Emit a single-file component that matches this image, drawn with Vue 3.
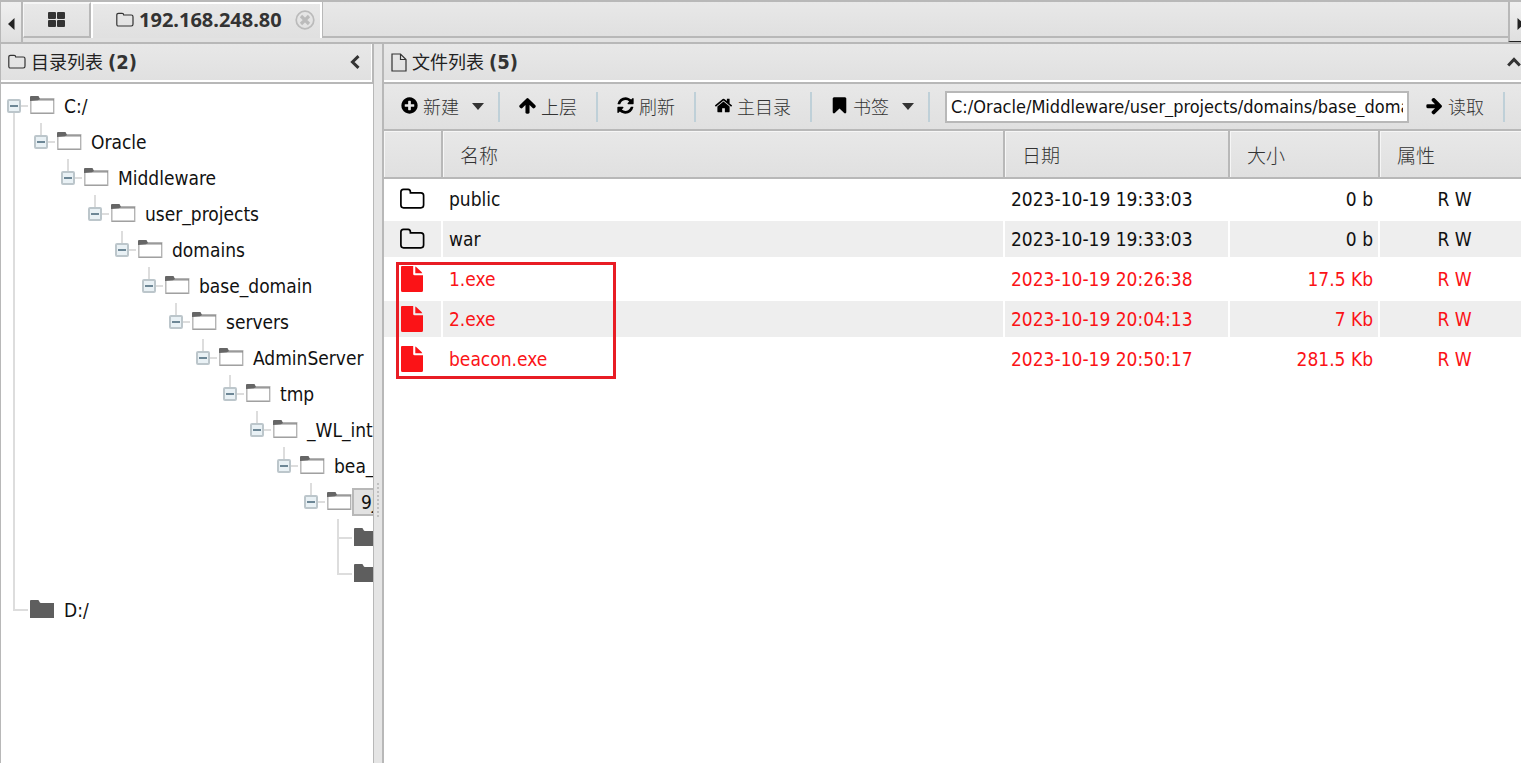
<script setup>
import { ref } from 'vue'

const path = ref('C:/Oracle/Middleware/user_projects/domains/base_domain/servers/AdminServer/tmp/')

const tree = [
  { name: 'C:/', depth: 0, open: true },
  { name: 'Oracle', depth: 1, open: true },
  { name: 'Middleware', depth: 2, open: true },
  { name: 'user_projects', depth: 3, open: true },
  { name: 'domains', depth: 4, open: true },
  { name: 'base_domain', depth: 5, open: true },
  { name: 'servers', depth: 6, open: true },
  { name: 'AdminServer', depth: 7, open: true },
  { name: 'tmp', depth: 8, open: true },
  { name: '_WL_internal', depth: 9, open: true },
  { name: 'bea_wls_internal', depth: 10, open: true },
  { name: '9j4dqk', depth: 11, open: true, selected: true },
  { name: '', depth: 12 },
  { name: '', depth: 12, last: true },
  { name: 'D:/', depth: 0, last: true },
]

const files = [
  { name: 'public', date: '2023-10-19 19:33:03', size: '0 b', attr: 'R W', dir: true },
  { name: 'war', date: '2023-10-19 19:33:03', size: '0 b', attr: 'R W', dir: true },
  { name: '1.exe', date: '2023-10-19 20:26:38', size: '17.5 Kb', attr: 'R W' },
  { name: '2.exe', date: '2023-10-19 20:04:13', size: '7 Kb', attr: 'R W' },
  { name: 'beacon.exe', date: '2023-10-19 20:50:17', size: '281.5 Kb', attr: 'R W' },
]

const icons = {
  plus: 'M1344 960v-128q0-26-19-45t-45-19h-256v-256q0-26-19-45t-45-19h-128q-26 0-45 19t-19 45v256h-256q-26 0-45 19t-19 45v128q0 26 19 45t45 19h256v256q0 26 19 45t45 19h128q26 0 45-19t19-45v-256h256q26 0 45-19t19-45zm320-64q0 209-103 385.5t-279.5 279.5-385.5 103-385.5-103-279.5-279.5-103-385.5 103-385.5 279.5-279.5 385.5-103 385.5 103 279.5 279.5 103 385.5z',
  up: 'M1675 971q0 51-37 90l-75 75q-38 38-91 38-54 0-90-38l-294-293v704q0 52-37.5 84.5t-90.5 32.5h-128q-53 0-90.5-32.5t-37.5-84.5v-704l-294 293q-36 38-90 38t-90-38l-75-75q-38-38-38-90 0-53 38-91l651-651q35-37 90-37 54 0 91 37l651 651q37 39 37 91z',
  refresh: 'M1639 1056q0 5-1 7-64 268-268 434.5t-478 166.5q-146 0-282.5-55t-243.5-157l-129 129q-19 19-45 19t-45-19-19-45v-448q0-26 19-45t45-19h448q26 0 45 19t19 45-19 45l-137 137q71 66 161 102t187 36q134 0 250-65t186-179q11-17 53-117 8-23 30-23h192q13 0 22.5 9.5t9.5 22.5zm25-800v448q0 26-19 45t-45 19h-448q-26 0-45-19t-19-45 19-45l138-138q-148-137-349-137-134 0-250 65t-186 179q-11 17-53 117-8 23-30 23h-199q-13 0-22.5-9.5t-9.5-22.5v-7q65-268 270-434.5t480-166.5q146 0 284 55.5t245 156.5l130-129q19-19 45-19t45 19 19 45z',
  home: 'M1472 992v480q0 26-19 45t-45 19h-384v-384h-256v384h-384q-26 0-45-19t-19-45v-480q0-1 .5-3t.5-3l575-474 575 474q1 2 1 6zm223-69l-62 74q-8 9-21 11h-3q-13 0-21-7l-692-577-692 577q-12 8-24 7-13-2-21-11l-62-74q-8-10-7-23.5t11-21.5l719-599q32-26 76-26t76 26l244 204v-195q0-14 9-23t23-9h192q14 0 23 9t9 23v408l219 182q10 8 11 21.5t-7 23.5z',
  bookmark: 'M1420 128q23 0 44 9 33 13 52.5 41t19.5 62v1289q0 34-19.5 62t-52.5 41q-19 8-44 8-48 0-83-32l-441-424-441 424q-36 33-83 33-23 0-44-9-33-13-52.5-41t-19.5-62v-1289q0-34 19.5-62t52.5-41q21-9 44-9h1048z',
  right: 'M1600 960q0 54-37 91l-651 651q-39 37-91 37-51 0-90-37l-75-75q-38-38-38-91t38-91l293-293h-704q-52 0-84.5-37.5t-32.5-90.5v-128q0-53 32.5-90.5t84.5-37.5h704l-293-294q-38-36-38-90t38-90l75-75q38-38 90-38 53 0 91 38l651 651q37 35 37 90z',
}

const actions = [
  { label: '新建', icon: icons.plus, menu: true },
  { label: '上层', icon: icons.up },
  { label: '刷新', icon: icons.refresh },
  { label: '主目录', icon: icons.home },
  { label: '书签', icon: icons.bookmark, menu: true },
]
</script>

<template>
  <div class="app">
    <nav class="tabbar">
      <button class="scroller" aria-label="向左滚动">
        <svg width="7" height="12" viewBox="0 0 7 12"><path d="M6.500 0v12L0 6z" fill="#222" /></svg>
      </button>
      <button class="tab home" aria-label="主页">
        <svg width="17" height="15" viewBox="0 0 17 15" fill="#333">
          <rect width="8" height="7" rx="1" /><rect x="9" width="8" height="7" rx="1" />
          <rect y="8" width="8" height="7" rx="1" /><rect x="9" y="8" width="8" height="7" rx="1" />
        </svg>
      </button>
      <div class="tab active">
        <svg width="18" height="16" viewBox="0 0 18 16" fill="none" stroke="#333" stroke-width="1.200">
          <path d="M.8 3q0-1.700 1.700-1.700h3.600q1.600 0 1.600 1.700h7.600q1.700 0 1.700 1.700v7.600q0 1.700-1.700 1.700H2.500Q.8 14 .8 12.300z" />
        </svg>
        <span>192.168.248.80</span>
        <button class="close" aria-label="关闭">
          <svg width="20" height="20" viewBox="0 0 20 20" fill="none" stroke="#bbb">
            <circle cx="10" cy="10" r="8.800" stroke-width="1.700" />
            <path d="M6 6l8 8M14 6l-8 8" stroke-width="3.200" />
          </svg>
        </button>
      </div>
      <div class="rest"></div>
      <button class="scroller end" aria-label="向右滚动">
        <svg width="7" height="12" viewBox="0 0 7 12"><path d="M.5 0v12L7 6z" fill="#222" /></svg>
      </button>
    </nav>

    <main class="panes">
      <aside class="side">
        <header class="head">
          <svg width="18" height="16" viewBox="0 0 18 16" fill="none" stroke="#333" stroke-width="1.200">
            <path d="M.8 3q0-1.700 1.700-1.700h3.600q1.600 0 1.600 1.700h7.600q1.700 0 1.700 1.700v7.600q0 1.700-1.700 1.700H2.500Q.8 14 .8 12.300z" />
          </svg>
          <h2>目录列表 <b>(2)</b></h2>
          <button class="fold" aria-label="折叠">
            <svg width="10" height="14" viewBox="0 0 10 14"><path d="M8.500 1.200L2.500 7l6 5.800" fill="none" stroke="#333" stroke-width="3" /></svg>
          </button>
        </header>
        <ul class="tree">
          <li v-for="(n, i) in tree" :key="i" :class="{ last: n.last, nested: n.depth > 0 }">
            <span v-if="n.depth > 0" class="indent" :style="{ width: n.depth * 27 + 'px' }"></span>
            <span class="branch" :class="{ leaf: !n.open }">
              <button v-if="n.open" class="toggle" aria-label="收起"></button>
            </span>
            <svg v-if="n.open" class="folder" width="25" height="20" viewBox="0 0 25 20">
              <path d="M.8 3.800h22.900V18.300H.8z" fill="#fff" stroke="#b4b4b4" stroke-width="1.400" />
              <path d="M.5 4.200h23.500v1.300H.5z" fill="#8a8a8a" />
              <path d="M1 18.400h22.500" stroke="#a0a0a0" stroke-width="1.200" />
              <path d="M0 6V2q0-1 1-1h7.500l1.500 3-2 1.200z" fill="#666" />
            </svg>
            <svg v-else class="folder" width="25" height="20" viewBox="0 0 25 20">
              <path d="M0 19V2q0-1 1-1h7q1 0 1.500 2 .5 1 1.500 1h13V19z" fill="#5e5e5e" />
            </svg>
            <span v-if="n.name" class="label" :class="{ selected: n.selected }">{{ n.name }}</span>
          </li>
        </ul>
      </aside>

      <div class="splitter"><span></span></div>

      <section class="content">
        <header class="head">
          <svg width="16" height="19" viewBox="0 0 16 19" fill="none" stroke="#333" stroke-width="1.200">
            <path d="M1 1h8.500L15 6.500V18H1zM9.500 1v5.500H15" />
          </svg>
          <h2>文件列表 <b>(5)</b></h2>
          <button class="fold" aria-label="折叠">
            <svg width="14" height="10" viewBox="0 0 14 10"><path d="M1.200 8.500L7 2.500l5.800 6" fill="none" stroke="#333" stroke-width="3" /></svg>
          </button>
        </header>

        <div class="toolbar">
          <button v-for="a in actions" :key="a.label" class="action">
            <svg width="19" height="19" viewBox="0 0 1792 1792" fill="#000"><path :d="a.icon" /></svg>
            <span>{{ a.label }}</span>
            <svg v-if="a.menu" class="caret" width="12" height="7" viewBox="0 0 12 7"><path d="M0 0h12L6 7z" fill="#333" /></svg>
          </button>
          <input v-model="path" class="path" type="text" aria-label="路径" />
          <button class="action read">
            <svg width="19" height="19" viewBox="0 0 1792 1792" fill="#000"><path :d="icons.right" /></svg>
            <span>读取</span>
          </button>
        </div>

        <div class="grid">
          <table>
            <colgroup>
              <col class="c-icon" /><col /><col class="c-date" /><col class="c-size" /><col class="c-attr" />
            </colgroup>
            <thead>
              <tr><th></th><th>名称</th><th>日期</th><th>大小</th><th>属性</th></tr>
            </thead>
            <tbody>
              <tr v-for="f in files" :key="f.name" :class="{ danger: !f.dir }">
                <td class="ico">
                  <svg v-if="f.dir" width="26" height="26" viewBox="0 0 26 26" fill="none" stroke="#000" stroke-width="1.700">
                    <path d="M1.900 6Q1.900 3.300 4.500 3.300h4.600q2.300 0 2.300 2.700v.8h10.500q2.700 0 2.700 2.700v9.600q0 2.700-2.700 2.700H4.500q-2.600 0-2.600-2.700z" />
                  </svg>
                  <svg v-else width="26" height="26" viewBox="0 0 26 26" fill="#fb1317">
                    <path d="M3 0h11.200v8q0 1.300 1.300 1.300H24V24.500q0 1.500-1.500 1.500H3.500Q2 26 2 24.500V1q0-1 1-1zM16.300.6q1 .4 1.700 1.100l4.300 4q.7.700 1 1.500h-7z" />
                  </svg>
                </td>
                <td>{{ f.name }}</td>
                <td>{{ f.date }}</td>
                <td class="size">{{ f.size }}</td>
                <td class="attr">{{ f.attr }}</td>
              </tr>
            </tbody>
          </table>
          <div class="marker"></div>
        </div>
      </section>
    </main>
  </div>
</template>

<style>
body {
  margin: 0;
  overflow: hidden;
}
</style>

<style scoped>
* {
  box-sizing: border-box;
}

.app {
  display: flex;
  flex-direction: column;
  height: 100vh;
  font-family: "DejaVu Sans Condensed", "Noto Sans CJK SC", sans-serif;
  font-size: 19px;
  color: #111;
  background: #fff;
}

svg {
  display: block;
  flex: none;
}

button {
  display: flex;
  align-items: center;
  padding: 0;
  border: 0;
  background: none;
  font: inherit;
  color: inherit;
}

/* tab strip */
.tabbar {
  display: flex;
  flex: none;
  height: 44px;
  border-top: 2px solid #b8b8b8;
  border-bottom: 2px solid #b8b8b8;
  border-left: 1px solid #b8b8b8;
  background: #e2e2e2;
}

.scroller {
  flex: none;
  width: 22px;
  height: 40px;
  padding: 4px 0 0 7px;
  border-right: 2px solid #b8b8b8;
  background: linear-gradient(#f0f0f0, #dfdfdf);
}

.scroller.end {
  width: 13px;
  padding-left: 7px;
  border-right: 0;
  border-left: 2px solid #b8b8b8;
  border-bottom: 1px solid #222;
  overflow: hidden;
}

.tab {
  display: flex;
  flex: none;
  align-items: center;
  height: 36px;
  background: linear-gradient(#e8e8e8, #e0e0e0);
}

.home {
  justify-content: center;
  width: 68px;
  padding-bottom: 2px;
  border-top: 2px solid #f6f6f6;
  border-left: 1px solid #f6f6f6;
  border-right: 2px solid #b8b8b8;
  border-bottom: 2px solid #b8b8b8;
}

.active {
  gap: 5px;
  padding: 0 5px 2px 23px;
  border: 2px solid #fff;
  border-bottom: 0;
  font: bold 20px "Noto Sans", sans-serif;
  line-height: 30px;
  color: #333;
}

.close {
  margin-left: 8px;
}

.rest {
  flex: 1;
  height: 36px;
  border-left: 1px solid #b8b8b8;
  border-bottom: 2px solid #b8b8b8;
  background: linear-gradient(#e8e8e8, #e0e0e0);
}

/* panes */
.panes {
  display: flex;
  flex: 1;
  min-height: 0;
}

.side {
  display: flex;
  flex: none;
  flex-direction: column;
  width: 374px;
  border-left: 1px solid #b8b8b8;
  border-right: 1px solid #b8b8b8;
  overflow: hidden;
}

.head {
  display: flex;
  flex: none;
  align-items: center;
  gap: 5px;
  height: 40px;
  padding: 0 12px 2px 7px;
  border-bottom: 2px solid #b8b8b8;
  background: linear-gradient(#e8e8e8, #e0e0e0);
  box-shadow: inset 0 -2px #fff;
}

.side .head {
  border-right: 1px solid #b8b8b8;
  box-shadow: inset -1px -2px #fff;
}

.content .head {
  padding-right: 0;
}

.head h2 {
  display: flex;
  align-items: center;
  gap: 5px;
  margin: 0;
  font-family: "Noto Sans", "Noto Sans CJK SC", sans-serif;
  font-size: 18px;
  font-weight: 400;
  line-height: 32px;
  color: #222;
}

.head b {
  font-family: "DejaVu Sans Condensed", sans-serif;
  font-size: 20px;
  color: #333;
}

.fold {
  margin-left: auto;
}

.splitter {
  display: flex;
  flex: none;
  align-items: center;
  width: 10px;
  padding: 194px 0 0 3px;
  border-right: 2px solid #b8b8b8;
  background: #e5e5e5;
}

.splitter span {
  width: 2px;
  height: 36px;
  background: repeating-linear-gradient(#c0c0c0 0 2px, transparent 2px 4px);
}

/* directory tree */
.tree {
  position: relative;
  margin: 0;
  padding: 3px 0 0 6px;
  list-style: none;
}

.tree::before {
  content: "";
  position: absolute;
  left: 12px;
  top: 28px;
  bottom: 18px;
  border-left: 2px solid #ddd;
}

.tree li {
  display: flex;
  align-items: center;
  height: 36px;
  white-space: nowrap;
}

.indent {
  flex: none;
}

.branch {
  position: relative;
  flex: none;
  width: 23px;
  height: 36px;
}

.branch::before {
  content: "";
  position: absolute;
  left: 6px;
  top: 18px;
  width: 15px;
  border-top: 2px solid #ddd;
}

.nested .branch::after {
  content: "";
  position: absolute;
  left: 6px;
  top: 0;
  height: 19px;
  border-left: 2px solid #ddd;
}

.nested:not(.last) .leaf::after {
  height: 36px;
}

.toggle {
  position: absolute;
  z-index: 1;
  left: 0;
  top: 12px;
  justify-content: center;
  width: 14px;
  height: 14px;
  border: 2px solid #bcc6cb;
  border-radius: 2px;
  background: #e9f1f5;
}

.toggle::before {
  content: "";
  width: 8px;
  height: 2px;
  background: #6d8796;
}

.label {
  margin-top: 2px;
  padding: 0 7px;
  border: 2px solid transparent;
  line-height: 24px;
}

.label.selected {
  border-color: #b8b8b8;
  background: #e2e2e2;
}

/* file list */
.content {
  display: flex;
  flex: 1;
  flex-direction: column;
  min-width: 0;
}

.toolbar {
  display: flex;
  flex: none;
  align-items: center;
  height: 47px;
  padding-right: 16px;
  border-bottom: 2px solid #b8b8b8;
  background: linear-gradient(#e8e8e8, #e0e0e0);
}

.action {
  flex: none;
  gap: 4px;
  height: 30px;
  padding: 0 19px 2px 18px;
  border-right: 2px solid #bfd0d8;
  font-size: 18px;
  font-weight: 300;
  color: #333;
}

.action:first-child {
  padding-left: 16px;
}

.action.read {
  padding-left: 16px;
}

.action .caret {
  margin: 2px -5px 0 9px;
}

.path {
  flex: 1;
  min-width: 0;
  height: 32px;
  margin-left: 15px;
  padding: 0 4px;
  border: 2px solid #b8b8b8;
  background: #fff;
  font: 18px "DejaVu Sans Condensed", sans-serif;
  color: #111;
}

.path:focus {
  outline: none;
}

.grid {
  position: relative;
}

table {
  width: 100%;
  table-layout: fixed;
  border-collapse: separate;
  border-spacing: 0;
}

.c-icon {
  width: 59px;
}

.c-date {
  width: 225px;
}

.c-size {
  width: 150px;
}

.c-attr {
  width: 141px;
}

th {
  height: 48px;
  padding: 0 17px;
  border-right: 2px solid #b8b8b8;
  border-bottom: 2px solid #b8b8b8;
  background: linear-gradient(#e8e8e8, #e0e0e0);
  box-shadow: inset 1px 1px #f6f6f6;
  font-size: 19px;
  font-weight: 300;
  text-align: left;
  color: #333;
}

td {
  height: 40px;
  padding: 0 6px;
  border: solid #fff;
  border-width: 2px 2px 2px 0;
  white-space: nowrap;
}

th:last-child,
td:last-child {
  border-right: 0;
}

tbody tr:nth-child(even) td {
  background: #eee;
}

.ico {
  padding-left: 15px;
}

.size {
  padding-right: 5px;
  text-align: right;
}

.attr {
  padding: 0 0 0 8px;
  text-align: center;
}

.danger {
  color: #fb1317;
}

/* frame around the executables */
.marker {
  position: absolute;
  left: 12px;
  top: 131px;
  width: 220px;
  height: 117px;
  border: 3px solid #e81c24;
  pointer-events: none;
}
</style>
